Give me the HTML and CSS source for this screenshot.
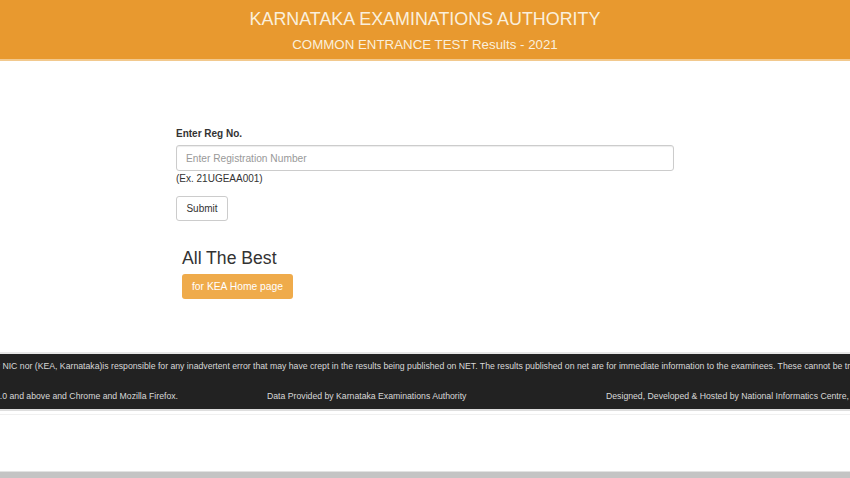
FILE: index.html
```html
<!DOCTYPE html>
<html>
<head>
<meta charset="utf-8">
<title>KEA CET Results 2021</title>
<link rel="stylesheet" href="styles.css">
</head>
<body>
<header class="top">
  <div class="title">KARNATAKA EXAMINATIONS AUTHORITY</div>
  <div class="subtitle">COMMON ENTRANCE TEST Results - 2021</div>
</header>
<main class="main">
  <form class="form">
    <label class="label">Enter Reg No.</label>
    <input class="input" type="text" placeholder="Enter Registration Number">
    <div class="hint">(Ex. 21UGEAA001)</div>
    <button class="submit" type="button">Submit</button>
  </form>
  <div class="best">All The Best</div>
  <a class="home" href="#">for KEA Home page</a>
</main>
<footer class="footer">
  <div class="row1"><span>Neither NIC nor (KEA, Karnataka)is responsible for any inadvertent error that may have crept in the results being published on NET. The results published on net are for immediate information to the examinees. These cannot be treated as original mark sheets.</span></div>
  <div class="row2">
    <div class="c1"><span>Best viewed in IE 9.0 and above and Chrome and Mozilla Firefox.</span></div>
    <div class="c2">Data Provided by Karnataka Examinations Authority</div>
    <div class="c3">Designed, Developed &amp; Hosted by National Informatics Centre, Karnataka</div>
  </div>
</footer>
<div class="after"></div>
<div class="bottombar"></div>
</body>
</html>
```
FILE: styles.css
```css
html, body {
  margin: 0;
  padding: 0;
}
body {
  width: 850px;
  height: 478px;
  overflow: hidden;
  background: #fff;
  font-family: "Liberation Sans", Arial, sans-serif;
  color: #333;
  display: flex;
  flex-direction: column;
}
.top {
  height: 59px;
  background: #e8992f;
  border-bottom: 2px solid #f2c98e;
  color: #faefdc;
  text-align: center;
  box-sizing: content-box;
}
.title {
  font-size: 17.9px;
  line-height: 20px;
  padding-top: 9px;
}
.subtitle {
  font-size: 13.3px;
  line-height: 16px;
  padding-top: 8px;
}
.main {
  padding-left: 176px;
  padding-top: 67px;
  height: 224px;
  box-sizing: border-box;
}
.form {
  display: flex;
  flex-direction: column;
  align-items: flex-start;
}
.label {
  font-weight: bold;
  font-size: 10px;
  line-height: 12px;
  color: #333;
}
.input {
  margin-top: 5px;
  width: 498px;
  height: 26px;
  box-sizing: border-box;
  border: 1px solid #ccc;
  border-radius: 3px;
  padding: 0 9px;
  font-family: "Liberation Sans", Arial, sans-serif;
  font-size: 10.2px;
  color: #555;
  box-shadow: inset 0 1px 1px rgba(0,0,0,0.075);
}
.input::placeholder {
  color: #999;
}
.hint {
  font-size: 10px;
  line-height: 12px;
  margin-top: 2px;
  color: #333;
}
.submit {
  margin-top: 11px;
  width: 52px;
  height: 25px;
  background: #fff;
  border: 1px solid #ccc;
  border-radius: 3px;
  font-family: "Liberation Sans", Arial, sans-serif;
  font-size: 10px;
  color: #333;
  padding: 0;
}
.best {
  margin-top: 27px;
  margin-left: 6px;
  font-size: 17.6px;
  line-height: 20px;
  color: #333;
}
.home {
  display: inline-block;
  margin-top: 6px;
  margin-left: 6px;
  height: 25px;
  line-height: 25px;
  padding: 0 10px;
  background: #efab4b;
  border-radius: 3px;
  color: #fff;
  font-size: 10.3px;
  text-decoration: none;
}
.footer {
  margin-top: 67px;
  border-top: 2px solid #e6e6e6;
  background: #222;
  color: #d8d8d8;
  font-size: 8.7px;
  height: 57px;
  box-sizing: border-box;
  overflow: hidden;
}
.row1 {
  display: flex;
  justify-content: flex-start;
  white-space: nowrap;
  height: 11px;
  line-height: 11px;
  margin-top: 7px;
  margin-left: -28px;
}
.row2 {
  display: grid;
  grid-template-columns: 178px 428px 244px;
  white-space: nowrap;
  margin-top: 19px;
  line-height: 11px;
}
.c1 {
  display: flex;
  justify-content: flex-end;
  overflow: hidden;
}
.c2 {
  padding-left: 89px;
}
.c3 {
  overflow: hidden;
}
.after {
  height: 6px;
  border-top: 2px solid #dedede;
  border-bottom: 1px solid #f0f0f0;
  box-sizing: border-box;
}
.bottombar {
  margin-top: auto;
  height: 6px;
  background: #c4c4c4;
  border-top: 1px solid #e2e2e2;
}
```
